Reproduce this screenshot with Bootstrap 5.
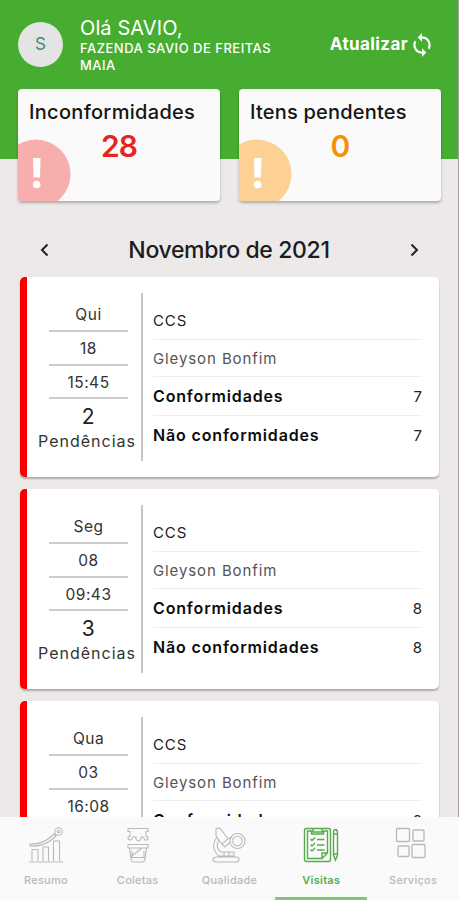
<!DOCTYPE html>
<html lang="pt-BR">
<head>
<meta charset="utf-8">
<meta name="viewport" content="width=device-width, initial-scale=1">
<title>Visitas</title>
<link href="https://cdn.jsdelivr.net/npm/bootstrap@5.3.0/dist/css/bootstrap.min.css" rel="stylesheet">
<style>
body{font-family:Inter,"Open Sans",sans-serif;background:#ece9e8;color:#1c1c1c}
.app{height:900px;border-right:1px solid #a5a2a3}
.app *{white-space:nowrap}
.hero{background:#47ad31;height:159px;padding-left:18px}
.who{height:89px;padding-right:26px}
.avatar{width:45px;height:45px;background:#e4e4e4;color:#3f8a72;font-size:17px}
.info{margin-left:17px;padding-top:16px;flex:1}
.hello{font-size:20px;line-height:24px;letter-spacing:.1px}
.farm{font-size:13px;line-height:17px;font-weight:500;letter-spacing:.5px}
.update{font-size:17px;font-weight:700;letter-spacing:.4px}
.stats{gap:19px}
.stat{width:202px;height:112px;background:#fafafa;border-radius:4px;box-shadow:0 2px 3px #0004}
.stat-name{font-size:20px;line-height:24px;font-weight:500;padding:11px 0 0 11px;color:#151515;letter-spacing:.3px}
.stat-name.tight{letter-spacing:.2px}
.stat-num{font-size:30px;line-height:34px;font-weight:600;padding-top:5px;letter-spacing:-1px}
.red{color:#e52620}.orange{color:#f59008}
.bang{left:0;bottom:0}
.month{height:24px;margin-top:79px;padding:0 39px}
.month-name{font-size:23px;font-weight:500;line-height:24px;letter-spacing:-.35px}
.visits{padding:15px 19px 0 20px;gap:12px}
.visit{height:200px;background:#fff;border-left:7px solid #f80000;border-radius:5px;box-shadow:0 2px 2px #0004;flex:none}
.when{width:116px;padding-left:9px;margin-top:16px;height:168px;border-right:2px solid #c6c6c6;font-size:15.5px;letter-spacing:.5px;color:#333}
.cell{width:79px;height:33.7px;line-height:33px;border-bottom:2px solid #cdcdcd}
.cell:first-child{height:39px;line-height:43px}
.amount{font-size:21px;line-height:24px;margin-top:6px;color:#222}
.pend{font-size:16px;line-height:25px;letter-spacing:1px;margin-left:-3px}
.what{margin:24px 17px 0 10px;flex:1;font-size:15px;letter-spacing:.9px;color:#222}
.line{height:39px;line-height:39px;border-bottom:1px solid #eee}
.line:first-child{height:38.5px}
.line:last-child{border:0}
.line.agent{height:37px;line-height:38px;color:#555}
.line b{font-weight:600;font-size:16px;letter-spacing:.85px;color:#0c0c0c}
.line b+span{letter-spacing:0}
.tabs{height:83px;background:#fafafa;color:#b9b9b9;font-size:11px;font-weight:500;letter-spacing:.25px}
.tab{flex:1;padding-top:10px;border-bottom:3px solid transparent}
.tab.on{color:#57ab4c;border-color:#82c57b;font-weight:600}
.tab svg{display:block}
.tab-label{margin-top:10px;line-height:14px}
</style>
<script src="https://cdn.jsdelivr.net/npm/bootstrap@5.3.0/dist/js/bootstrap.bundle.min.js"></script>
</head>
<body>
<div class="app position-relative overflow-hidden">
<header class="hero">
 <div class="who d-flex align-items-center">
  <div class="avatar rounded-circle d-flex align-items-center justify-content-center flex-shrink-0">S</div>
  <div class="info text-white align-self-start"><div class="hello">Olá SAVIO,</div><div class="farm">FAZENDA SAVIO DE FREITAS<br>MAIA</div></div>
  <div class="update text-white d-flex align-items-center gap-1">Atualizar
   <svg width="20" height="26" viewBox="3 0 18 24" fill="#fff"><path d="M12 4V1L8 5l4 4V6c3.310 0 6 2.690 6 6 0 1.010-.25 1.970-.7 2.800l1.460 1.460C19.540 15.030 20 13.570 20 12c0-4.420-3.580-8-8-8zm0 14c-3.310 0-6-2.690-6-6 0-1.010.25-1.970.7-2.800L5.240 7.740C4.460 8.970 4 10.430 4 12c0 4.420 3.580 8 8 8v3l4-4-4-4v3z"/></svg></div>
 </div>
 <div class="stats d-flex">
  <div class="stat position-relative overflow-hidden flex-shrink-0"><div class="stat-name">Inconformidades</div><div class="stat-num red text-center">28</div>
   <svg class="bang position-absolute" width="53" height="62"><circle cx="18" cy="35" r="34.5" fill="#f8aeac"/><path d="M15 19h7.500l-.5 19.500h-6.500z" fill="#fff"/><circle cx="18.700" cy="45.500" r="3.800" fill="#fff"/></svg></div>
  <div class="stat position-relative overflow-hidden flex-shrink-0"><div class="stat-name tight">Itens pendentes</div><div class="stat-num orange text-center">0</div>
   <svg class="bang position-absolute" width="53" height="62"><circle cx="18" cy="35" r="34.5" fill="#fdd094"/><path d="M15 19h7.500l-.5 19.500h-6.500z" fill="#fff"/><circle cx="18.700" cy="45.500" r="3.800" fill="#fff"/></svg></div>
 </div>
</header>
<div class="month d-flex align-items-center justify-content-between">
 <svg width="10" height="14" fill="none" stroke="#222" stroke-width="2"><path d="M8.5 1.5 3 7l5.500 5.500"/></svg>
 <span class="month-name">Novembro de 2021</span>
 <svg width="10" height="14" fill="none" stroke="#222" stroke-width="2"><path d="M2.500 1.500 8 7l-5.500 5.500"/></svg>
</div>
<main class="visits d-flex flex-column">
 <section class="visit d-flex"><div class="when d-flex flex-column align-items-center text-center"><div class="cell">Qui</div><div class="cell">18</div><div class="cell">15:45</div><div class="amount">2</div><div class="pend">Pendências</div></div>
 <div class="what"><div class="line">CCS</div><div class="line agent">Gleyson Bonfim</div><div class="line d-flex justify-content-between"><b>Conformidades</b><span>7</span></div><div class="line d-flex justify-content-between"><b>Não conformidades</b><span>7</span></div></div></section>
 <section class="visit d-flex"><div class="when d-flex flex-column align-items-center text-center"><div class="cell">Seg</div><div class="cell">08</div><div class="cell">09:43</div><div class="amount">3</div><div class="pend">Pendências</div></div>
 <div class="what"><div class="line">CCS</div><div class="line agent">Gleyson Bonfim</div><div class="line d-flex justify-content-between"><b>Conformidades</b><span>8</span></div><div class="line d-flex justify-content-between"><b>Não conformidades</b><span>8</span></div></div></section>
 <section class="visit d-flex"><div class="when d-flex flex-column align-items-center text-center"><div class="cell">Qua</div><div class="cell">03</div><div class="cell">16:08</div></div>
 <div class="what"><div class="line">CCS</div><div class="line agent">Gleyson Bonfim</div><div class="line d-flex justify-content-between"><b>Conformidades</b><span>8</span></div></div></section>
</main>
<nav class="tabs d-flex fixed-bottom">
 <div class="tab d-flex flex-column align-items-center"><svg width="36" height="36" viewBox="0 0 36 36" fill="none" stroke="currentColor" stroke-width="1.100"><path d="M1 35h34M4 34V22.500h6V34M15 34V20h5.500V34M25.500 34V14h6v20M2 17c9 1 17-3 24-10l2 2C20 17 12 20 2 19z"/><circle cx="30.500" cy="4.500" r="3.800"/><circle cx="30.500" cy="4.500" r="1.300"/></svg><div class="tab-label">Resumo</div></div>
 <div class="tab d-flex flex-column align-items-center"><svg width="36" height="36" viewBox="0 0 36 36" fill="none" stroke="currentColor" stroke-width="1.100"><path d="M8 1.500h20v3h-2v5q2.500 0 2 2t-3 1.500l-2-3h-2v2q-3 4-5 0v-2h-3l-2 3q-3 0-3-2t2-1.500v-5H8zM8 17.500h20v3.500H8zM9.500 21 11 32q.5 3 3 3h8q2.500 0 3-3l1.500-11M11 29.500 22 21M12 24v6.500h12V24"/></svg><div class="tab-label">Coletas</div></div>
 <div class="tab d-flex flex-column align-items-center"><svg width="36" height="36" viewBox="0 0 36 36" fill="none" stroke="currentColor" stroke-width="1.100"><path d="M5 1.500 9 1l8 11-6 5-6-8zM5 2v7M17 12l4-2M11 17l3 3 5-5M6 10C0 18 3 25 8 29M8 13c-4 7-1 10 2 12h13v4H7M13 25v4M18 25v4M5 30h20q3 0 3 2.500T25 35H5q-3 0-3-2.500T5 30"/><circle cx="26.500" cy="14" r="7.500"/><circle cx="26.500" cy="14" r="4.800"/></svg><div class="tab-label">Qualidade</div></div>
 <div class="tab on d-flex flex-column align-items-center"><svg width="36" height="36" viewBox="0 0 36 36" fill="none" stroke="currentColor" stroke-width="1.400"><rect x="1.500" y="1.500" width="26" height="33" rx="2"/><path d="M4.500 4v27.500H19l5.500-5.500V4h-4v3h-12V4zM10 2v3h9V2M19 31.500V26h5.500M14 12.500h7.500M14 18h7.500M14 23h7.500M7.500 12l1.500 1.500 3-3M7.500 17.500 9 19l3-3M7.500 22.500 9 24l3-3M30.500 6q0-3.500 2-3.500t2 3.500v22l-2 5-2-5zM30.500 7h4M30.500 27h4"/></svg><div class="tab-label">Visitas</div></div>
 <div class="tab d-flex flex-column align-items-center"><svg width="36" height="36" viewBox="0 0 36 36" fill="none" stroke="currentColor" stroke-width="1.300"><rect x="1.500" y="1.500" width="13" height="13" rx="1"/><rect x="18" y="3" width="11" height="11" rx="1"/><rect x="3" y="19" width="11" height="10.500" rx="1"/><rect x="17" y="17.500" width="13" height="13" rx="1"/></svg><div class="tab-label">Serviços</div></div>
</nav>
</div>
</body>
</html>
